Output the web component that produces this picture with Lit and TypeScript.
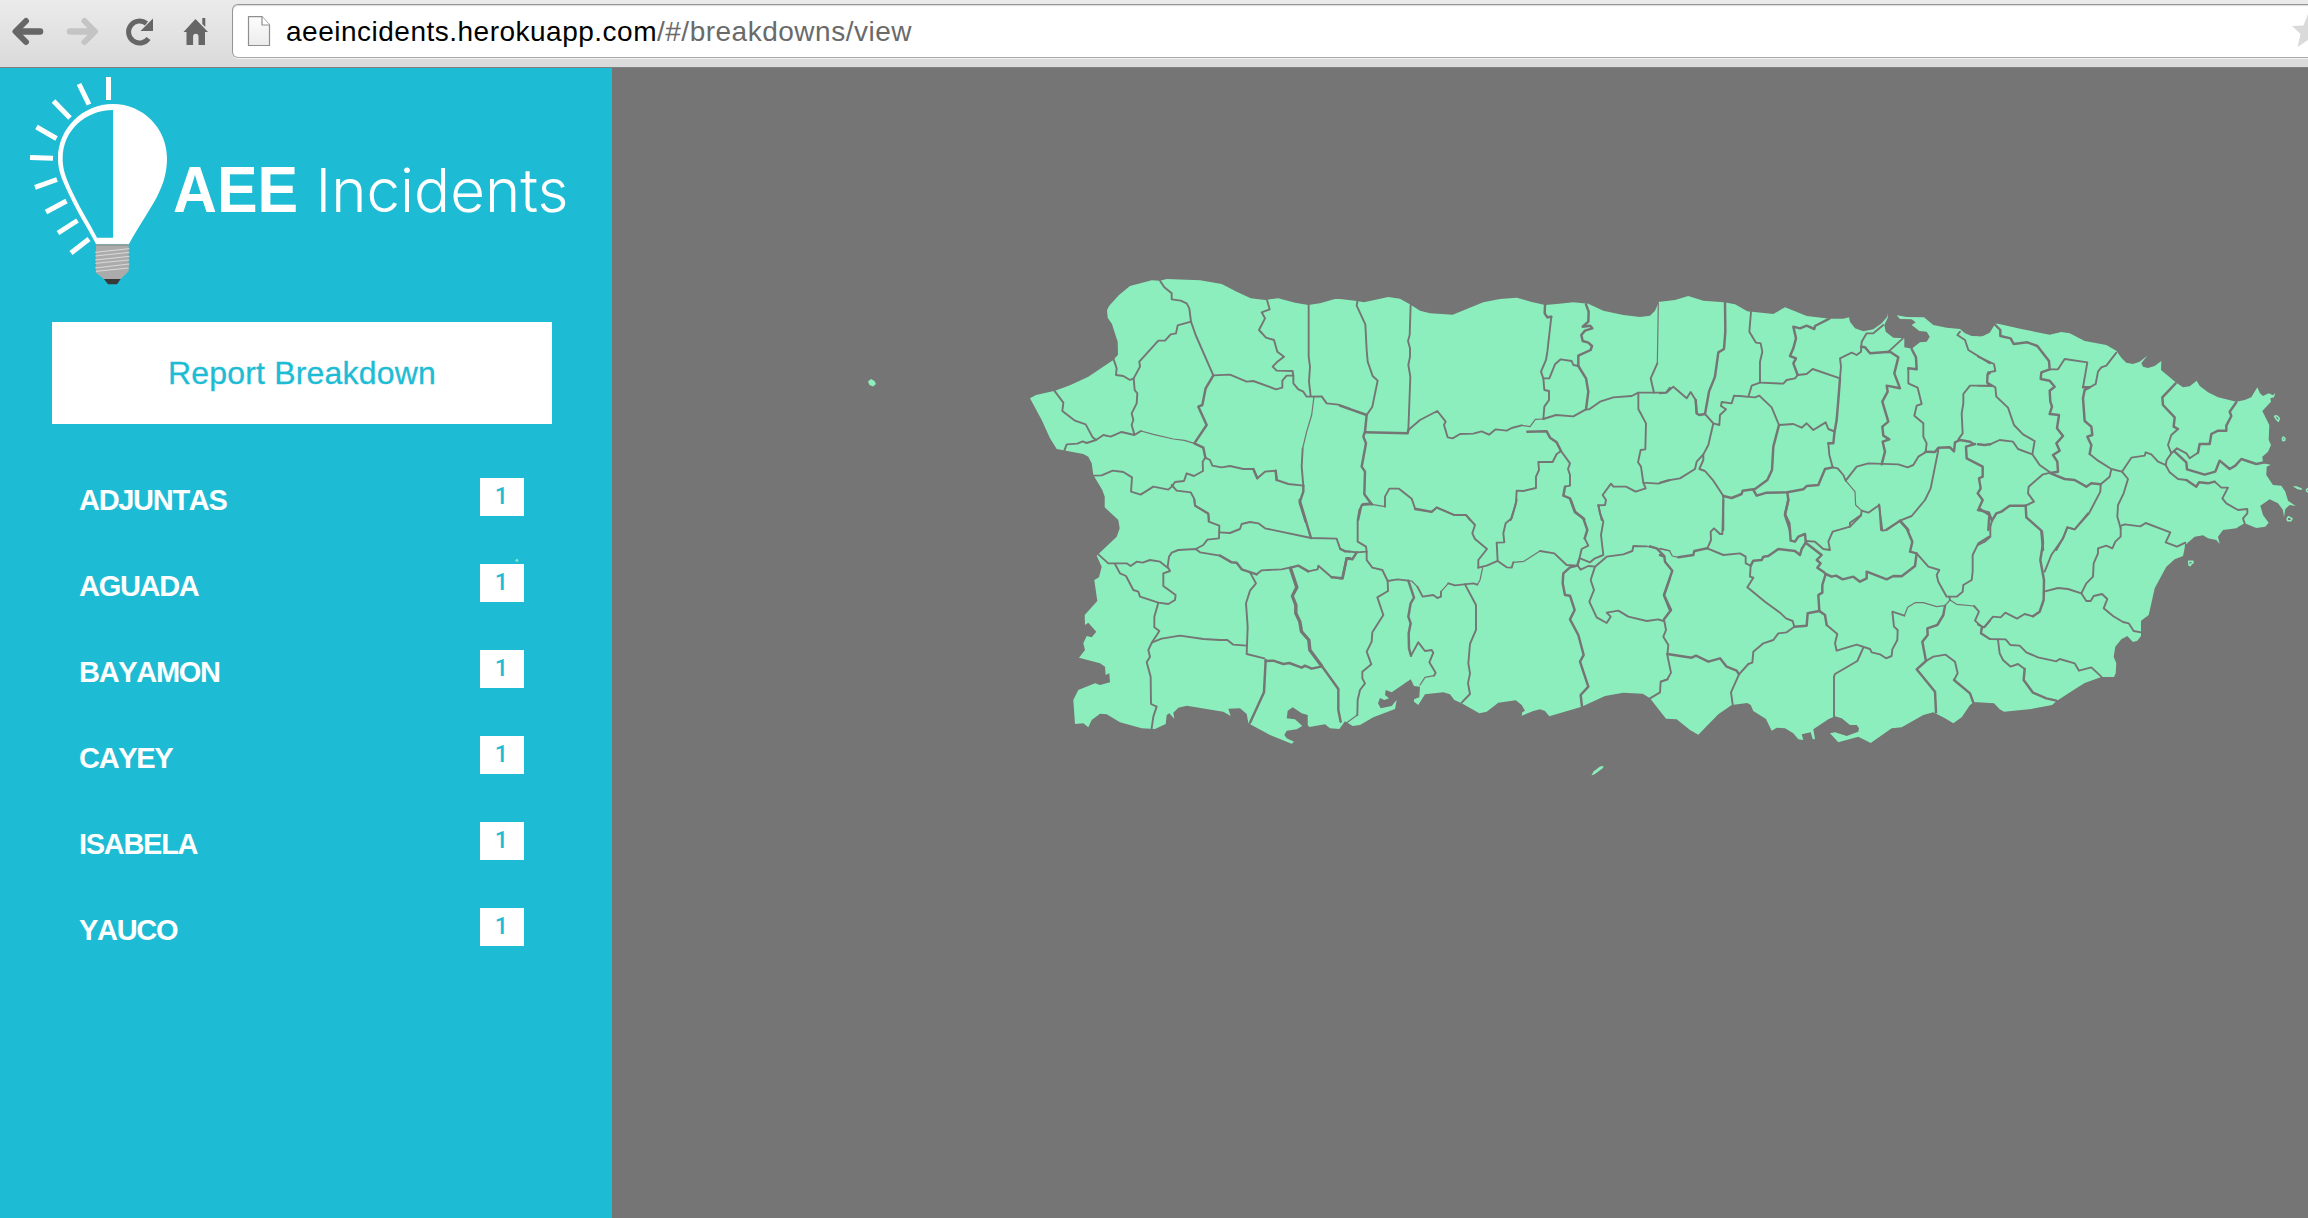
import { LitElement, html, svg, css } from "lit";
import { customElement } from "lit/decorators.js";

/** A survey sheet: its origin on the canvas, and lines drawn at three units per pixel. */
interface Sheet {
  x: number;
  y: number;
  coast: string;
  fine?: string[];
  normal: string[];
  heavy?: string[];
}

const NW: Sheet = {
  x: 1020, y: 260,
  coast: "30,415 48,405 105,392 150,376 205,350 280,300 294,284 293,245 280,205 276,192 263,173 261,150 268,137 297,105 330,78 395,61 420,62 440,57 540,61 605,72 650,95 692,115 735,120 775,115 825,128 865,135 900,130 945,117",
  fine: [
    "343,525 363,513 400,523 460,537 493,541 523,550",
    "882,410 875,465 860,515 848,565",
  ],
  normal: [
    "420,62 433,82 455,100 455,118 482,122 500,130 508,145 513,185 527,225 580,346",
    "513,185 473,196 468,220 452,223 435,242 415,242 358,305 360,320 341,355 344,390 352,400 350,430 335,460 340,480 335,495 343,523",
    "281,298 290,325 288,345 310,348 330,360 341,355",
    "103,392 130,428 127,453 165,482 197,493 218,532 228,540",
    "133,572 140,553 172,551 188,544 200,549 228,540 250,525 272,530 305,516 343,525 363,513",
    "556,593 570,600 577,617 605,622 630,618 670,627 700,627 712,655 735,635 767,632 770,660 805,672 850,677",
    "556,593 548,605 549,633 522,648 500,640 492,663 465,666 455,680 445,689 400,680 362,704 333,695 336,652 310,636 278,632 245,646 220,647",
    "455,675 470,692 512,697 523,717 525,737 565,762 567,780",
    "580,346 630,344 680,365 700,363 768,388 787,383 787,362 800,347 820,347 818,333 770,332 758,320 770,307 792,290 772,275 762,240 738,233 717,210 735,175 725,157 749,148 741,120",
    "820,347 820,370 835,388 850,395 860,410 905,409 920,430 955,434 990,447",
    "866,135 866,290 870,320 867,365 872,408",
    "848,565 845,620 850,677",
  ],
  heavy: [
    "580,346 557,385 547,435 535,440 560,495 523,550 550,563 556,593",
    "700,627 712,655", "767,632 770,660",
    "850,677 850,695 839,727 857,785",
  ],
};

const N: Sheet = {
  x: 1340, y: 260,
  coast: "0,117 45,122 72,127 145,111 180,116 212,134 240,152 270,160 338,164 380,147 430,127 480,117 530,113 575,126 615,135 650,132 700,127 745,131 790,152 850,165 900,171 930,167 945,152 957,125",
  fine: [
    "545,496 570,500 586,478 610,477",
    "955,130 952,310", "95,733 135,740",
  ],
  normal: [
    "52,125 50,137 76,193 80,270 83,305 98,348 113,362 97,440 80,465",
    "135,740 135,710 148,686 177,686 215,716 225,745 275,755 290,743 342,765 378,765 390,780",
    "205,510 240,480 292,453 317,485 312,495 323,532 338,535 360,522 400,521 425,514 447,524 467,508 500,512 515,504 545,496",
    "610,477 648,465 700,469 738,448 748,448 780,425 820,412 875,408 895,398 978,398 990,383",
    "212,135 209,225 204,243 210,265 210,290 205,315 211,350 205,510",
    "622,172 634,170 622,275 618,300 603,335 610,355 613,390 627,393 627,420 613,440 610,477",
    "610,355 628,355 645,313 662,298 695,303 700,315 715,318",
    "952,310 932,355 942,398",
    "675,680 690,677 690,645 684,627 690,610 663,573",
    "663,573 650,582 638,606 595,606 597,630 588,650 588,684 550,693 530,692 528,730 512,780",
    "895,398 895,447 918,490 916,568 902,570 894,607 903,620 910,668 955,671 990,660",
    "910,668 917,685 887,695 858,680 820,680 813,671 788,705 798,720 795,735 775,736 785,780",
    "95,733 65,735 55,780",
  ],
  heavy: [
    "0,437 80,465 75,515 70,530 78,550 65,620 75,635 73,703 95,733",
    "75,517 203,520 205,510",
    "615,135 614,160 622,172 634,170",
    "715,318 715,287 752,270 756,258 745,248 728,243 724,225 735,212 757,205 750,197 728,200 745,185 746,155 738,133",
    "715,318 738,355 745,395 738,448",
    "562,515 620,514 630,533 650,547 663,573",
    "675,680 670,707 690,715 705,755 733,778",
  ],
};

const NC: Sheet = {
  x: 1660, y: 270,
  coast: "0,95 45,90 85,78 130,92 192,97 225,103 262,124 340,132 375,112 405,124 440,138 510,146 550,146 567,142 570,155 585,175 610,184 640,178 665,160 682,140 682,130 684,142 673,165 677,185 700,203 733,205 733,232 755,236 780,217 800,215 809,200 800,185 778,183 755,165 767,157 755,148 720,147 710,136 740,141 792,142 820,165 860,173 900,177 915,190 935,198 960,199",
  fine: [
    "222,377 262,380", "557,632 585,665 587,705 605,722",
  ],
  normal: [
    "0,370 20,368 40,350 80,385 92,366 107,390 110,430",
    "135,432 160,460 178,465 180,435 198,418 183,408 185,396 215,400 222,377 285,382 298,377 335,412 357,465",
    "190,678 175,655 160,632 135,603 118,597 130,570 130,553 110,575 105,597 60,625 20,632 0,638",
    "160,460 145,525 130,553",
    "273,125 268,185 288,218 302,220 307,245 300,275 300,338 275,347 266,377",
    "300,338 370,341 380,330 405,325 413,315",
    "413,315 440,312 458,297 540,325",
    "357,465 400,462 425,473 440,460 460,480 497,457 505,477 520,483",
    "505,520 508,555 518,592",
    "540,325 543,290 540,265 575,248 590,255 603,245 605,215 620,190 640,190 670,165",
    "683,247 728,206",
    "745,295 745,340 773,353 785,402 770,407 763,437 790,460 790,500 800,520 797,545",
    "800,545 775,560 760,585 743,592 715,583 625,580 590,590 557,632 550,615 533,595 518,592",
    "605,722 625,728 658,705 663,780",
    "605,722 603,737 570,770",
    "835,540 812,655 795,690 755,738 720,752 680,778",
    "190,678 190,780",
    "900,185 892,195 915,210 925,240 990,280",
    "990,347 930,347 910,372 910,400 905,430 908,490 895,508",
    "990,310 982,313 982,340 990,347",
  ],
  heavy: [
    "195,97 196,185 192,237 175,247 165,320 147,365 135,432 118,435 110,430 107,390",
    "357,465 340,530 336,600 322,630 285,657 248,662 245,672 215,684 190,678",
    "413,315 400,280 408,265 390,258 400,235 408,205 400,170 420,175 440,167 463,177 465,168 508,146",
    "505,520 520,520 523,490 530,450 535,390 540,325",
    "603,230 615,232 630,250 690,245 715,262 703,310 720,355 680,347 683,365 667,395 685,455 667,470 670,497 688,508 668,515 675,545 665,583",
    "755,237 768,262 770,298 745,295",
    "797,545 825,546 835,533 870,532 882,544 885,517 900,510 930,515 940,522",
    "518,592 495,597 475,645 440,648 430,658 382,667 320,668 290,677 280,660",
    "382,667 385,690 375,735 390,780",
    "720,752 745,780",
    "945,522 918,530 920,565 968,590 968,620 957,625 962,655 953,670 968,690 957,715 988,735 985,780",
  ],
};

const NE: Sheet = {
  x: 1978, y: 310,
  coast: "0,80 15,78 35,68 52,41 60,41 130,57 215,74 250,66 275,70 320,93 385,105 415,122 430,143 445,158 465,162 485,155 508,137 490,160 495,170 510,174 530,168 550,153 549,180 595,218 615,232 635,229 656,212 665,228 690,247 720,262 775,275 800,270 820,262 838,232 846,250 855,258 872,250 885,256 892,248 888,262 877,265 879,275 853,303 874,345 872,390 879,405 870,425 853,440 855,460 878,464 866,470 865,495 885,525 910,527 922,545 930,572 953,588 935,585 922,597 918,622 915,600 900,580 875,568 847,587 855,615 872,638 862,650 835,654 800,640 785,648 775,655 735,660 720,680 725,702 715,690 690,685 675,676 650,680 625,702",
  fine: ["0,228 47,229"],
  normal: [
    "0,140 48,162 52,183 30,187 27,217 52,232 55,260 90,293 108,345 135,373 170,393 163,433",
    "215,178 240,178 260,147 328,157 315,232",
    "335,232 353,222 360,185 370,172 385,167 415,128",
    "36,403 65,390 105,395 120,417 163,433 185,465 218,488",
    "368,523 395,500 400,477 432,485 460,443 500,437 503,427 520,433 540,455 563,465 566,450 580,430 597,415 625,430 635,445 660,428",
    "335,432 360,452 400,477",
    "600,357 580,375 570,405 580,430",
    "563,465 575,487 600,507 625,510",
    "432,485 450,507 437,550 420,585 418,620 428,655",
    "428,648 440,643 487,649 503,639 577,667 563,697 597,710 622,698",
    "368,523 367,545 333,610 290,658 268,652 255,685 235,720",
    "218,488 195,493 152,530 150,550 168,575 143,587",
    "42,632 37,650 37,680 20,695 0,705",
    "710,515 730,533 750,533 733,565 745,580 780,600 808,597 808,610 795,625 800,640",
  ],
  heavy: [
    "0,403 20,405 36,403",
    "52,45 67,60 67,78 98,85 107,102 148,97 178,108 213,153 215,178 190,187 188,207 215,212 230,230 215,242 217,275 222,290 215,312 243,315 237,355 255,378 235,400 245,422 225,435 238,455 240,485 218,489",
    "218,490 260,507 290,510 325,530 340,520 368,523",
    "315,232 335,232 320,240 315,265 320,333 340,350 343,375 328,380 340,405 335,432",
    "593,220 553,262 555,285 590,322 587,350 600,357",
    "660,428 665,402 695,402 700,372 720,362 745,362 745,347 760,318 755,305 775,277",
    "590,425 625,457 627,478 680,494 712,485 725,452 755,477 772,467 790,447 835,462 860,457",
    "625,510 655,530 663,517 690,520 710,515",
    "143,587 95,587 70,605 55,610 42,632 32,607 0,600",
    "143,587 145,622 190,662 195,720",
  ],
};

const SE: Sheet = {
  x: 1978, y: 500,
  coast: "622,128 619,150 615,168 590,178 565,200 530,265 512,345 489,362 489,408 478,422 465,426 448,408 430,418 412,440 407,470 415,490 413,520 408,531 370,531 320,549 290,568 237,602 222,615 160,627 78,635 65,628 48,610 0,607",
  normal: [
    "330,40 290,88 268,82 255,115 220,165 200,215",
    "165,349 140,342 117,356 82,338 68,352 45,350 18,382 0,374",
    "10,385 10,400 35,417 83,418 97,435 125,437 145,457 180,472 235,484 245,477 290,490 303,512 340,502 370,530",
    "198,275 240,264 270,267 310,280 325,250 345,230 347,190 360,160 360,145 385,137 403,145 412,125 428,110 428,83",
    "310,280 325,303 338,303 347,288 372,282 388,297 377,325 405,348 435,366 452,370 467,393 489,397",
    "60,420 65,460 75,480 98,500 120,492 140,507",
  ],
  heavy: [
    "192,95 195,130 187,180 198,240 197,300 185,335 165,349",
    "140,507 137,540 165,578 205,595 235,602",
  ],
};

const SC: Sheet = {
  x: 1660, y: 500,
  coast: "942,607 930,615 905,652 880,670 855,655 820,637 790,645 725,682 695,685 632,729 595,710 535,727 510,700 525,697 560,708 595,695 597,685 590,675 570,675 545,655 525,649 505,658 460,688 465,718 458,717 452,697 425,703 430,720 415,718 400,700 375,685 350,683 335,692 318,657 280,633 272,615 262,609 215,615 175,643 115,704 90,690 50,658 18,656",
  fine: [
    "0,145 28,152 37,168 55,172",
    "733,347 743,322 765,308 790,308 830,320 855,317 870,300 890,313 942,318",
  ],
  normal: [
    "657,13 667,92 680,90 720,63",
    "603,45 570,68 570,80 518,95 505,125 510,150 490,147 465,125 437,123",
    "142,145 190,165 240,160 257,170 257,190 272,197",
    "190,0 187,102 180,102 162,85 152,95 153,120 142,145",
    "272,197 270,230 280,233 262,262 315,305 360,338 378,355 398,363 403,380",
    "403,380 380,397 355,400 340,420 310,430 280,455 277,488 265,492 237,523 213,577 218,613",
    "12,358 18,390 10,410 25,435 22,465 33,518 22,538 3,545",
    "500,375 532,402 525,430 530,452 590,434 630,447 635,457 660,463 678,475 695,468 697,448 712,420 713,390 702,380 697,335 733,347",
    "942,318 957,335 945,362 967,382 962,400 990,417",
    "967,382 975,380 990,362",
    "610,443 592,483 525,522 522,530 522,649",
    "798,483 820,470 857,464 885,485 893,520 882,540",
    "987,110 955,130 938,165 938,215 935,240 910,255 908,275 890,290 860,290 835,245 830,225 838,210 805,200 770,160",
    "870,300 868,290",
  ],
  heavy: [
    "55,172 100,165 103,153 142,145",
    "272,197 280,182 305,180 310,170 325,168 355,147 405,153 420,165 425,147 437,128",
    "385,0 375,43 388,70 392,122 405,125 415,110 435,102 437,123",
    "437,128 485,165 470,180 482,190 472,203 490,215 497,222 487,255 487,278 475,285 478,333 443,340 440,377 403,380",
    "478,333 495,345 500,375",
    "497,222 515,230 528,227 548,238 580,230 600,245 620,235 620,215 680,238 700,228 725,229 765,198 770,160 750,155 757,125 740,85 720,63",
    "22,462 95,473 108,467 145,485 180,475 200,500 230,512 237,523",
    "0,165 13,170 15,185 37,212 12,285 33,330 12,358",
    "855,317 850,345 832,375 802,385 803,405 787,425 798,483 770,508 825,575 828,637",
    "882,540 930,580 940,608",
  ],
};

const S: Sheet = {
  x: 1340, y: 500,
  coast: "978,656 930,595 908,581 850,578 795,588 725,620 628,649 615,633 600,628 580,633 545,647 547,637 555,632 545,615 527,601 475,608 440,635 418,640 365,610 343,600 330,583 310,577 255,583 235,615 222,605 222,598 238,592 240,560 222,558 212,538 155,577 137,570 135,585 147,595 133,600 120,594 114,610 122,625 155,618 170,600 165,627 100,652 60,675 38,678 15,664",
  fine: [
    "52,645 20,668",
    "205,242 215,243 232,260", "303,275 325,250", "412,254 420,240 428,203",
    "520,187 552,184 600,153", "920,139 990,153",
    "240,555 255,532 282,527",
  ],
  normal: [
    "225,28 275,36 290,22 342,45 378,45 405,75 397,100 405,117 441,147 415,180 415,203",
    "734,115 745,137 725,147 717,180",
    "530,0 515,55 497,70 490,100 493,127 470,128 473,183 500,202 515,203 520,187",
    "600,153 643,160 680,195 712,197",
    "775,15 780,40 790,65 783,105 790,165 765,175 750,187 720,175",
    "95,10 68,12 58,30 53,60 53,125 78,140 80,155 50,157",
    "0,147 15,153 50,157",
    "80,155 80,180 97,203 127,210 143,243 144,273 112,292 130,345 97,397 95,425 80,455 94,493 67,515 67,535 75,550 60,570 53,600 52,645",
    "143,243 172,238 205,242",
    "232,260 248,290 280,285 292,294 303,290 303,275",
    "325,250 345,256 400,250 412,254",
    "415,203 440,197 473,183",
    "375,253 408,315 408,390 390,432 385,490 390,520 384,550 390,582 365,608",
    "765,200 752,240 762,270 748,305 770,352 800,369 812,350 800,338 835,332 865,350 920,363 955,358 970,363",
    "213,467 235,427 255,453 275,450 280,458 268,487 287,518 282,527",
    "712,195 722,209 745,198 765,200 800,170 850,163 877,153 880,138 920,139",
    "983,538 962,545 960,577 930,595",
    "990,235 972,288 988,328",
  ],
  heavy: [
    "692,0 705,37 730,55 742,90 734,115",
    "50,157 37,178 20,175 8,235 0,235",
    "205,242 222,293 212,310 205,350 212,370 206,400 207,445 213,467",
    "717,180 712,197 690,202 670,220 668,250 675,285 690,287 704,330 690,358 715,405 731,465 720,485 745,560 722,585 726,620",
    "930,139 950,145 973,168",
  ],
};

const SW: Sheet = {
  x: 1020, y: 500,
  coast: "958,687 930,685 915,673 868,681 863,675 863,645 845,640 818,622 803,632 800,655 825,658 847,678 830,688 800,692 793,705 800,715 822,725 815,731 750,705 693,674 685,668 680,642 660,625 625,626 632,648 610,635 500,617 475,623 460,638 463,656 448,640 440,645 437,672 405,687 365,685 300,667 260,643 240,641 215,660 205,682 190,670 165,672 160,600 175,570 225,550 240,555 270,547 268,520 257,525 255,500 240,490 177,473 195,450 190,430 200,408 215,412 229,395 205,368 195,375 194,345 232,303 223,240 237,232 245,200 230,167 238,160 290,110 299,85 295,60 254,22 254,-10 247,-30 220,-75 215,-110 205,-130 190,-138 110,-153 90,-185 65,-240",
  normal: [
    "523,0 525,17 565,40 566,65 598,77 597,115 562,119 550,135 527,147",
    "235,163 265,190 285,190 320,190 332,198 350,185 368,188 390,180 420,185 443,203",
    "285,192 300,220 318,228 340,270 355,275 360,290 415,308 445,312 465,300 467,285 430,258 430,220 450,213 443,200 447,170 455,158 475,150 527,147 540,157 600,167",
    "710,223 725,211 785,208 812,202",
    "865,214 893,208 895,197 935,232",
    "598,97 630,99 660,87 665,72 690,66 715,70 735,85 873,114 950,116 960,145 975,155 990,155",
    "415,308 403,350 403,382 418,393 412,403 397,425 385,450 390,470 380,487 392,530 393,612 410,620 400,650 395,685",
    "397,427 425,416 480,407 550,417 600,420 622,420 640,434 680,437",
    "690,217 708,250 690,272 678,310 683,380 680,462 733,475",
  ],
  heavy: [
    "600,167 635,187 650,188 665,208 710,223",
    "812,203 835,197 865,214",
    "935,232 967,235 980,175 990,175",
    "737,480 732,577 690,668",
    "737,483 760,482 790,492 808,489 845,503 855,497 875,506 903,500",
    "839,0 873,114",
    "813,205 832,262 818,288 829,315 829,340 841,365 846,395 868,420 871,450 906,497",
    "810,205 829,262 816,288 826,315 826,340 838,365 843,395 865,420 868,450 903,497",
    "905,497 955,567 955,630 962,665",
  ],
};

const SHEETS = [NW, N, NC, NE, SE, SC, S, SW];

const COAST = SHEETS.map((s) =>
  s.coast
    .split(" ")
    .map((p) => {
      const [px, py] = p.split(",").map(Number);
      return `${(s.x + px / 3).toFixed(1)},${(s.y + py / 3).toFixed(1)}`;
    })
    .join(" "),
).join(" ");

@customElement("island-map")
export class IslandMap extends LitElement {
  static styles = css`
    :host { display: block; width: 100%; height: 100%; }
    .canvas { display: block; width: 1696px; height: 1150px; overflow: visible; }
    .land { fill: #8ceebd; }
    .islet { fill: none; stroke: #8ceebd; stroke-width: 4.5; stroke-linejoin: round; }
    .line { fill: none; stroke: #757575; stroke-linejoin: round; stroke-linecap: round; }
    .fine { stroke-width: 3.6; }
    .normal { stroke-width: 5.7; }
    .heavy { stroke-width: 7.4; }
  `;

  private lines(kind: string, list: string[] = []) {
    return list.map((points) => svg`<polyline class="line ${kind}" points=${points}></polyline>`);
  }

  render() {
    return html`
      <svg class="canvas" viewBox="612 68 1696 1150" aria-label="Puerto Rico">
        <polygon class="land" points=${COAST}></polygon>
        ${SHEETS.map((s) => svg`
          <g transform="translate(${s.x} ${s.y}) scale(0.33333)">
            ${this.lines("fine", s.fine)}${this.lines("normal", s.normal)}${this.lines("heavy", s.heavy)}
          </g>`)}
        <g transform="translate(1978 310) scale(0.33333)">
          <path class="islet" d="M890 319l6-2 8 8-3 9-6-6zM913 386l3-5 5 4-1 6-5 1zM984 541l6-6M984 541l6 6M927 627l4-7 11 6-3 6-10 0z"></path>
          <path class="land" d="M944 529l12 0 15 6 1 5-13-2z"></path>
        </g>
        <path class="islet" transform="translate(1978 500) scale(0.33333)" d="M632 184l13 0-1 6-4 0-3 7-4-2z"></path>
        <path class="land" d="M1591.5 775.5l2-4 6.5-5 3.5-.5-.5 2-8 6z"></path>
        <path class="land" d="M868 381.500l3-2.500 3.500 2 1.500 3-3 2.500-3.500-1.500z"></path>
        <path class="land" d="M515.500 561.500v-1.500l2-1.500 1 3z"></path>
      </svg>`;
  }
}

@customElement("browser-bar")
export class BrowserBar extends LitElement {
  static styles = css`
    :host {
      display: flex; box-sizing: border-box; height: 68px; padding: 4px 0 0 12px;
      background: linear-gradient(#ebebeb, #dadada); border-bottom: 1px solid #808080;
      overflow: hidden;
    }
    .tools { flex: none; width: 220px; height: 54px; }
    .tools svg { display: block; }
    .dark { stroke: #666; fill: none; }
    .pale { stroke: #c4c4c4; fill: none; }
    .solid { fill: #666; }
    .field {
      flex: none; box-sizing: border-box; width: 2120px; height: 54px; display: flex; align-items: center;
      padding: 0 0 0 14px; background: #fff; border: 1px solid #959595; border-bottom-color: #a8aaa8;
      border-radius: 6px; box-shadow: inset 0 1px 1px #ddd, 0 1px 0 #f2f2f2;
    }
    .page { flex: none; width: 24px; height: 32px; }
    .url {
      flex: none; box-sizing: border-box; margin-left: 15px; width: 2005px; padding-top: 2px;
      font: 28px/52px "Liberation Sans", Arial, sans-serif;
      letter-spacing: 0.5px; color: #6a6a6a; white-space: nowrap;
    }
    .host { color: #000; }
    .star { flex: none; width: 34px; height: 34px; }
  `;

  render() {
    return html`
      <div class="tools">
        <svg width="220" height="54" viewBox="12 4 220 54">
          <g class="dark" stroke-width="6" stroke-linecap="round" stroke-linejoin="round">
            <path d="M40 31.500H17" stroke-width="6.500"></path>
            <path d="M26 21L15.500 31.500 26 42"></path>
          </g>
          <g class="pale" stroke-width="6" stroke-linecap="round" stroke-linejoin="round">
            <path d="M70 31.500H92" stroke-width="6.500"></path>
            <path d="M84.500 21L95 31.500 84.500 42"></path>
          </g>
          <path class="dark" stroke-width="5" d="M148.500 38.500A11 11 0 1 1 146.500 23.500"></path>
          <path class="solid" d="M153 18.500V31H140.500z"></path>
          <path class="solid" d="M195.500 19L208 32H205V45H198.500V36.500a2.700 2.700 0 0 0-5.400 0V45H186.500V32H183.500zM202.300 18h3v9l-3-3z"></path>
        </svg>
      </div>
      <div class="field">
        <svg class="page" viewBox="0 0 24 32">
          <defs>
            <linearGradient id="sheet" x1="0" y1="0" x2="0" y2="1">
              <stop offset="0" stop-color="#fdfdfd"></stop><stop offset="1" stop-color="#ececec"></stop>
            </linearGradient>
          </defs>
          <path fill="url(#sheet)" stroke="#8f8f8f" stroke-width="1.200" d="M1.500 1.600H15L22.500 10V30.500H1.500z"></path>
          <path fill="#fff" stroke="#8f8f8f" stroke-width="1.200" d="M15 1.600V10H22.500"></path>
        </svg>
        <div class="url"><span class="host">aeeincidents.herokuapp.com</span>/#/breakdowns/view</div>
        <svg class="star" viewBox="0 0 34 34">
          <path fill="#dadada" d="M17 0l4.500 11.500L33 12l-9 8 3.500 13L17 26 6.500 33 9.500 20 1 12l11.500-.5z"></path>
        </svg>
      </div>`;
  }
}

@customElement("app-root")
export class AppRoot extends LitElement {
  static styles = css`
    :host {
      display: flex; flex-direction: column; width: 2308px; height: 1218px; overflow: hidden;
      font-family: "Liberation Sans", Arial, sans-serif;
    }
    .body { display: flex; flex: 1; min-height: 0; background: #757575; }
    .side { flex: none; box-sizing: border-box; width: 612px; background: #1ebcd4; }
    .map { flex: 1; min-width: 0; }
    .logo { display: block; width: 612px; height: 254px; }
    .aee { font: bold 64px "Liberation Sans", Arial, sans-serif; fill: #fff; }
    .incidents { font: 300 60.5px Inter, Roboto, sans-serif; fill: #fff; }
    .rays { stroke: #fff; stroke-width: 5; fill: none; }
    .report {
      display: flex; align-items: center; justify-content: center; box-sizing: border-box;
      width: 500px; height: 102px; margin-left: 52px; padding: 0; border: 0; background: #fff;
      color: #1ebcd4; font: 32px/36px "Liberation Sans", Arial, sans-serif; letter-spacing: 0.2px;
      -webkit-text-stroke: 0.3px #1ebcd4;
    }
    .list { list-style: none; margin: 32px 0 0; padding: 0 88px 0 79px; }
    .row { display: flex; justify-content: space-between; height: 86px; padding-top: 22px; box-sizing: border-box; }
    .name {
      font: bold 29px/34px "Liberation Sans", Arial, sans-serif; font-kerning: none;
      letter-spacing: -1.3px; color: #fff; padding-top: 5px;
    }
    .count {
      box-sizing: border-box; width: 44px; height: 38px; padding-right: 1px; background: #fff; color: #1ebcd4;
      text-align: center; font: 500 23.5px/37px Roboto, sans-serif;
    }
  `;

  private towns = ["ADJUNTAS", "AGUADA", "BAYAMON", "CAYEY", "ISABELA", "YAUCO"];

  render() {
    return html`
      <browser-bar></browser-bar>
      <div class="body">
        <div class="side">
          <svg class="logo" viewBox="0 68 612 254">
            <path class="rays" d="M108.500 77V100M79 84L89 104.500M53.500 101L70 118M36.500 127L56.500 138.500M30 157.500L53 158.300M35 187.300L57 179.500M46 212L66.500 201M58 233L77.500 220.500M71 253L89 239"></path>
            <g transform="translate(0 60) scale(0.33333)">
              <path fill="#fff" d="M339 132C430 132 501 206 501 295C501 335 491 372 471 410C450 450 415 500 387 552H288C266 508 232 458 208 405C186 358 174 335 174 295C174 206 248 132 339 132z"></path>
              <path fill="#1ebcd4" d="M339 150V533H291C270 492 243 450 220 402C198 355 188 332 188 295C188 212 256 150 339 150z"></path>
              <path fill="#ababab" d="M288 553H386V562L388 566 386 572V586L388 591 386 596V610L388 615 386 620V634L362 657H312L288 638V626L286 622 288 616V604L286 600 288 594V582L286 578 288 572z"></path>
              <path fill="none" stroke="#dadada" stroke-width="3" d="M286 577L388 566M286 588L388 577M286 600L388 589M286 610L388 600M286 624L388 612M288 634L386 624"></path>
              <path fill="none" stroke="#8c8c8c" stroke-width="2.500" d="M288 556H386"></path>
              <path fill="#393939" d="M312 657H362L351 673H324z"></path>
            </g>
            <text class="aee" x="173" y="211.700" textLength="125" lengthAdjust="spacingAndGlyphs">AEE</text>
            <text class="incidents" x="315.500" y="211.700" textLength="253" lengthAdjust="spacingAndGlyphs">Incidents</text>
          </svg>
          <button class="report">Report Breakdown</button>
          <ul class="list">
            ${this.towns.map((t) => html`<li class="row"><span class="name">${t}</span><span class="count">1</span></li>`)}
          </ul>
        </div>
        <div class="map"><island-map></island-map></div>
      </div>`;
  }
}
